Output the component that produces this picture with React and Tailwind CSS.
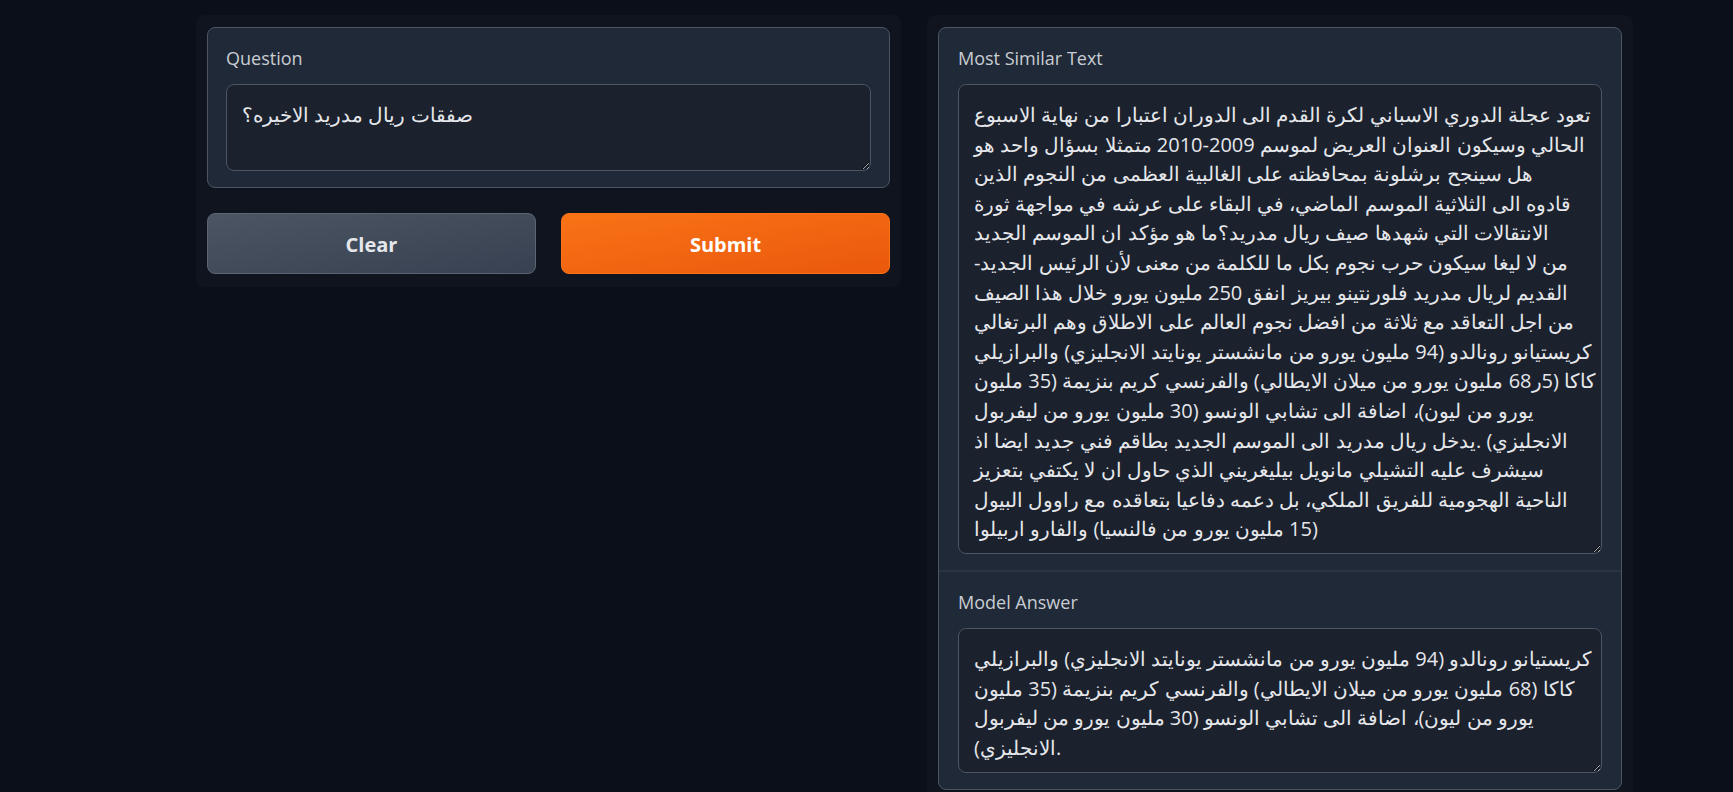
import React from 'react';

const RLM = '\u200F';

const similarLines = [
  'تعود عجلة الدوري الاسباني لكرة القدم الى الدوران اعتبارا من نهاية الاسبوع',
  'الحالي وسيكون العنوان العريض لموسم 2009-2010 متمثلا بسؤال واحد هو',
  'هل سينجح برشلونة بمحافظته على الغالبية العظمى من النجوم الذين',
  'قادوه الى الثلاثية الموسم الماضي، في البقاء على عرشه في مواجهة ثورة',
  'الانتقالات التي شهدها صيف ريال مدريد؟ما هو مؤكد ان الموسم الجديد',
  'من لا ليغا سيكون حرب نجوم بكل ما للكلمة من معنى لأن الرئيس الجديد-',
  'القديم لريال مدريد فلورنتينو بيريز انفق 250 مليون يورو خلال هذا الصيف',
  'من اجل التعاقد مع ثلاثة من افضل نجوم العالم على الاطلاق وهم البرتغالي',
  'كريستيانو رونالدو (94 مليون يورو من مانشستر يونايتد الانجليزي) والبرازيلي',
  'كاكا (5ر68 مليون يورو من ميلان الايطالي) والفرنسي كريم بنزيمة (35 مليون',
  'يورو من ليون)، اضافة الى تشابي الونسو (30 مليون يورو من ليفربول',
  'الانجليزي) .يدخل ريال مدريد الى الموسم الجديد بطاقم فني جديد ايضا اذ',
  'سيشرف عليه التشيلي مانويل بيليغريني الذي حاول ان لا يكتفي بتعزيز',
  'الناحية الهجومية للفريق الملكي، بل دعمه دفاعيا بتعاقده مع راوول البيول',
  '(15 مليون يورو من فالنسيا) والفارو اربيلوا',
];

const answerLines = [
  'كريستيانو رونالدو (94 مليون يورو من مانشستر يونايتد الانجليزي) والبرازيلي',
  'كاكا (68 مليون يورو من ميلان الايطالي) والفرنسي كريم بنزيمة (35 مليون',
  'يورو من ليون)، اضافة الى تشابي الونسو (30 مليون يورو من ليفربول',
];

// each line kept as its own paragraph, marks keep the bidi order of the wrapped original
const similarText = similarLines.map((l) => RLM + l + RLM).join('\n');
const answerText =
  answerLines.map((l) => RLM + l + RLM).join('\n') + '\n' + RLM + 'الانجليزي)' + RLM + '.';

const font = "font-['Open_Sans','Noto_Sans',sans-serif]";

const Label = ({ children }) => (
  <div className={`text-[18px] leading-[20px] text-[#c9cdd3] ${font}`}>{children}</div>
);

const Area = ({ value, h }) => (
  <textarea
    readOnly
    defaultValue={value}
    spellCheck={false}
    className={`mt-4 block w-full ${h} rounded-lg border border-[#4b5563] bg-[#1b212d] pl-[15px] pr-3 pt-[15px] pb-2 text-[20px] leading-[29.6px] text-[#e5e7eb] whitespace-pre overflow-hidden outline-none resize-y [color-scheme:dark] ${font}`}
  />
);

export default function App() {
  return (
    <div className="min-h-screen bg-[#0b0f19] overflow-hidden">
      <div className="flex items-start gap-[26px] pl-[196px] pt-[15px]">
        <div className="w-[705px] rounded-lg bg-[#10141e] px-[11px] pt-3 pb-[13px]">
          <div className="rounded-lg border border-[#4b5563] bg-[#1f2937] px-[18px] pt-5 pb-4">
            <Label>Question</Label>
            <Area value="صفقات ريال مدريد الاخيره؟" h="h-[87px]" />
          </div>
          <div className="mt-[25px] flex gap-[25px]">
            <button
              className={`h-[61px] flex-1 rounded-lg border border-[#5b6472] bg-gradient-to-br from-[#4b5563] to-[#374151] pt-[3px] text-[20px] font-bold text-[#e5e7eb] ${font}`}
            >
              Clear
            </button>
            <button
              className={`h-[61px] flex-1 rounded-lg border border-[#f97316] bg-gradient-to-br from-[#f97316] to-[#ea580c] pt-[3px] text-[20px] font-bold text-white ${font}`}
            >
              Submit
            </button>
          </div>
        </div>

        <div className="w-[706px] rounded-t-lg bg-[#10141e] px-[11px] pt-3 pb-6">
          <div className="rounded-lg border border-[#4b5563] bg-[#1f2937]">
            <div className="px-[19px] pt-5 pb-4">
              <Label>Most Similar Text</Label>
              <Area value={similarText} h="h-[470px]" />
            </div>
            <div className="border-t-2 border-[#2a3443] px-[19px] pt-5 pb-4">
              <Label>Model Answer</Label>
              <Area value={answerText} h="h-[145px]" />
            </div>
          </div>
        </div>
      </div>
    </div>
  );
}
